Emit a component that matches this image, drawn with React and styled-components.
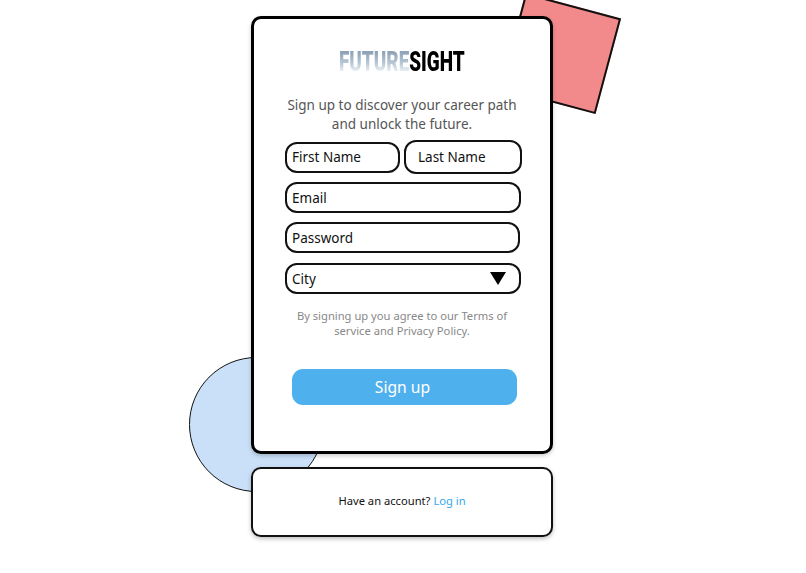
import React from 'react'
import styled, { createGlobalStyle } from 'styled-components'

const Global = createGlobalStyle`
  html, body {
    margin: 0;
    padding: 0;
    background: #fff;
    font-family: "Noto Sans", "Open Sans", sans-serif;
  }
  * { box-sizing: border-box; }
`

function App() {
  return (
    <>
      <Global />
      <Page>
        <Stage>
          <Square />
          <Circle />
          <Card>
            <Logo>
              <LogoFade>FUTURE</LogoFade>
              <LogoDark>SIGHT</LogoDark>
            </Logo>
            <Intro>Sign up to discover your career path<br />and unlock the future.</Intro>
            <NameRow>
              <Field $w={115} $h={31} placeholder="First Name" />
              <Field $w={118} $h={34} $pad={12} placeholder="Last Name" />
            </NameRow>
            <Field $w={236} $h={31} placeholder="Email" />
            <Field $w={235} $h={31} placeholder="Password" type="password" />
            <CityBox>
              City
              <Arrow viewBox="0 0 16 13"><path d="M0 0h16L8 13z" /></Arrow>
            </CityBox>
            <Terms>By signing up you agree to our Terms of<br />service and Privacy Policy.</Terms>
            <SignUp>Sign up</SignUp>
          </Card>
          <LoginCard>
            Have an account?&nbsp;<LoginLink href="#">Log in</LoginLink>
          </LoginCard>
        </Stage>
      </Page>
    </>
  )
}

export default App

const Page = styled.div`
  width: 806px;
  height: 573px;
  overflow: hidden;
  display: flex;
  justify-content: center;
  padding: 16px 0 0 0;
`
const Stage = styled.div`
  position: relative;
  width: 302px;
  margin-left: -2px;
  display: flex;
  flex-direction: column;
  gap: 13px;
`
const Square = styled.div`
  position: absolute;
  left: 260px;
  top: -12px;
  width: 99px;
  height: 99px;
  background: #f28a8b;
  border: 2px solid #111;
  transform: rotate(15deg);
`
const Circle = styled.div`
  position: absolute;
  left: -62px;
  top: 341px;
  width: 135px;
  height: 135px;
  border-radius: 50%;
  background: #c9e0f8;
  border: 1.5px solid #111;
`
const Card = styled.div`
  position: relative;
  height: 438px;
  background: #fff;
  border: 3px solid #000;
  border-radius: 10px;
  box-shadow: 0 2px 4px rgba(0, 0, 0, 0.2);
  padding: 29px 0 0 31px;
  display: flex;
  flex-direction: column;
  align-items: flex-start;
`
const Logo = styled.div`
  align-self: center;
  margin-left: -32px;
  height: 28px;
  display: flex;
  font-family: "Roboto", sans-serif;
  font-weight: 900;
  font-size: 27px;
  line-height: 28px;
  transform: scaleX(0.7);
`
const LogoFade = styled.span`
  background: linear-gradient(180deg, #8ea3b8 15%, #b9c8d6 55%, #eef2f6 85%);
  -webkit-background-clip: text;
  background-clip: text;
  color: transparent;
`
const LogoDark = styled.span`
  color: #000;
`
const Intro = styled.p`
  align-self: center;
  margin: 20px 0 6px -31px;
  text-align: center;
  font-size: 13.5px;
  line-height: 19px;
  color: #555;
`
const NameRow = styled.div`
  display: flex;
  align-items: center;
  gap: 4px;
  margin-bottom: 8px;
`
const Field = styled.input`
  display: block;
  width: ${p => p.$w}px;
  height: ${p => p.$h}px;
  padding: 0 0 0 ${p => p.$pad || 5}px;
  border: 2px solid #111;
  border-radius: 12px;
  background: #fff;
  outline: none;
  font-family: inherit;
  font-size: 13.5px;
  color: #111;
  margin-bottom: 9px;
  ${NameRow} & { margin-bottom: 0; }
  &::placeholder { color: #111; opacity: 1; }
`
const CityBox = styled.div`
  width: 236px;
  height: 31px;
  margin-top: 1px;
  padding: 0 13px 0 5px;
  border: 2px solid #111;
  border-radius: 12px;
  display: flex;
  align-items: center;
  justify-content: space-between;
  font-size: 13.5px;
  color: #111;
`
const Arrow = styled.svg`
  width: 16px;
  height: 13px;
  fill: #000;
`
const Terms = styled.p`
  align-self: center;
  margin: 14px 0 0 -31px;
  text-align: center;
  font-size: 11.2px;
  line-height: 15px;
  color: #888;
`
const SignUp = styled.button`
  width: 225px;
  height: 36px;
  margin: 31px 0 0 7px;
  padding: 0 4px 0 0;
  border: none;
  border-radius: 11px;
  background: #4fb0ee;
  color: #fff;
  font-family: inherit;
  font-size: 15.7px;
`
const LoginCard = styled.div`
  position: relative;
  height: 70px;
  padding-bottom: 3px;
  background: #fff;
  border: 2px solid #111;
  border-radius: 10px;
  box-shadow: 0 2px 4px rgba(0, 0, 0, 0.25);
  display: flex;
  align-items: center;
  justify-content: center;
  font-size: 11.2px;
  color: #111;
`
const LoginLink = styled.a`
  color: #34a8ea;
  text-decoration: none;
`
